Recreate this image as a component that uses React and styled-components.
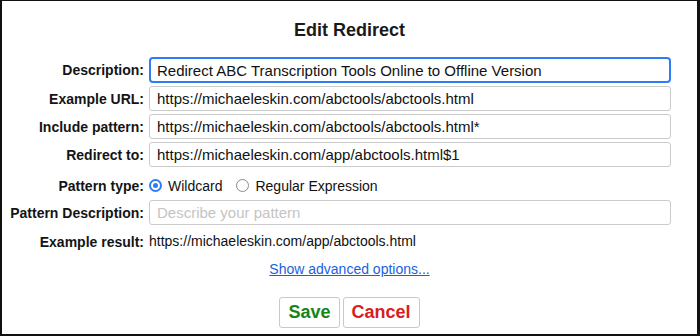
import styled, { createGlobalStyle } from 'styled-components';

const GlobalStyle = createGlobalStyle`
  html, body {
    margin: 0;
    padding: 0;
    background: #fff;
  }
  body {
    font-family: "Liberation Sans", Arial, sans-serif;
    color: #1c1c1c;
  }
`;

const Frame = styled.div`
  box-sizing: border-box;
  width: 700px;
  height: 336px;
  border-style: solid;
  border-color: #111;
  border-width: 1px 3px 2px 2px;
  display: flex;
  flex-direction: column;
  align-items: center;
`;

const Title = styled.h2`
  margin: 19px 0 0;
  font-size: 18px;
  font-weight: bold;
  line-height: 20px;
  color: #1a1a1a;
`;

const Form = styled.div`
  align-self: flex-start;
  margin: 17px 0 0 8px;
  display: grid;
  grid-template-columns: 134px 522px;
  column-gap: 5px;
  row-gap: 3px;
  align-items: center;
`;

const Label = styled.label`
  box-sizing: border-box;
  padding-top: ${p => (p.$shift ? '4px' : '0')};
  font-size: 14px;
  font-weight: bold;
  text-align: right;
  white-space: nowrap;
  color: #141414;
`;

const Input = styled.input`
  box-sizing: border-box;
  width: 100%;
  height: ${p => (p.$focused ? '26px' : '25px')};
  margin: 0;
  padding: 0 ${p => (p.$focused ? '6px' : '7px')};
  font-family: "Liberation Sans", Arial, sans-serif;
  font-size: 15px;
  color: #111;
  background: #fff;
  border: ${p => (p.$focused ? '2px solid #2f7df6' : '1px solid #cbcbcb')};
  border-radius: ${p => (p.$focused ? '4px' : '3px')};
  outline: none;

  &::placeholder {
    color: #c4c4c4;
  }
`;

const RadioGroup = styled.div`
  box-sizing: border-box;
  height: 27px;
  padding-top: 4px;
  display: flex;
  align-items: center;
  gap: 14px;
  font-size: 14px;
  color: #111;
`;

const RadioOption = styled.span`
  display: inline-flex;
  align-items: center;
  gap: 6px;
`;

const RadioDot = styled.span`
  box-sizing: border-box;
  width: 13px;
  height: 13px;
  border-radius: 50%;
  border: ${p => (p.$checked ? '2px solid #2f7df6' : '1px solid #8a8a8a')};
  display: inline-flex;
  align-items: center;
  justify-content: center;

  &::after {
    content: '';
    width: 5px;
    height: 5px;
    border-radius: 50%;
    background: ${p => (p.$checked ? '#2f7df6' : 'transparent')};
  }
`;

const ResultText = styled.div`
  height: 27px;
  line-height: 27px;
  font-size: 14px;
  color: #111;
`;

const AdvancedLink = styled.a`
  margin-top: 6px;
  font-size: 14px;
  color: #1a5fe0;
  text-decoration: underline;
  cursor: pointer;
`;

const Buttons = styled.div`
  margin-top: 20px;
  display: flex;
  gap: 3px;
`;

const Button = styled.button`
  box-sizing: border-box;
  height: 31px;
  padding: 0 8px;
  font-family: "Liberation Sans", Arial, sans-serif;
  font-size: 18px;
  font-weight: bold;
  color: ${p => p.$color};
  background: #fff;
  border: 1px solid #c9c9c9;
  border-radius: 3px;
`;

function App() {
  return (
    <>
      <GlobalStyle />
      <Frame>
        <Title>Edit Redirect</Title>
        <Form>
          <Label>Description:</Label>
          <Input $focused defaultValue="Redirect ABC Transcription Tools Online to Offline Version" />

          <Label>Example URL:</Label>
          <Input defaultValue="https://michaeleskin.com/abctools/abctools.html" />

          <Label>Include pattern:</Label>
          <Input defaultValue="https://michaeleskin.com/abctools/abctools.html*" />

          <Label>Redirect to:</Label>
          <Input defaultValue="https://michaeleskin.com/app/abctools.html$1" />

          <Label $shift>Pattern type:</Label>
          <RadioGroup>
            <RadioOption>
              <RadioDot $checked />
              Wildcard
            </RadioOption>
            <RadioOption>
              <RadioDot />
              Regular Expression
            </RadioOption>
          </RadioGroup>

          <Label>Pattern Description:</Label>
          <Input placeholder="Describe your pattern" />

          <Label>Example result:</Label>
          <ResultText>https://michaeleskin.com/app/abctools.html</ResultText>
        </Form>
        <AdvancedLink>Show advanced options...</AdvancedLink>
        <Buttons>
          <Button $color="#168416">Save</Button>
          <Button $color="#d81d1d">Cancel</Button>
        </Buttons>
      </Frame>
    </>
  );
}

export default App;
